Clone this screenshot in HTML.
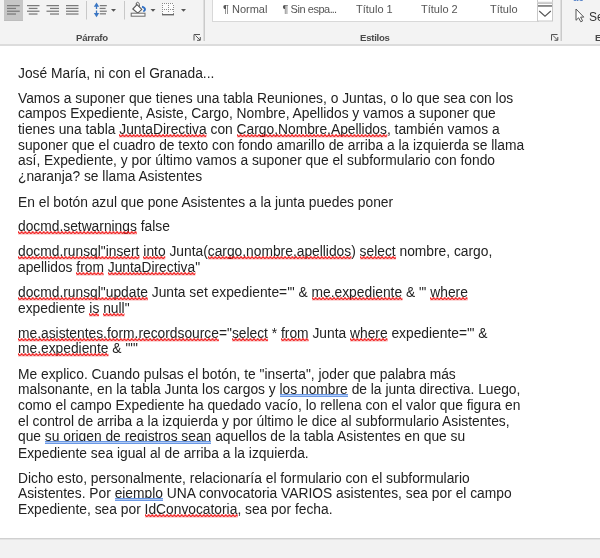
<!DOCTYPE html>
<html><head><meta charset="utf-8">
<style>
html,body{margin:0;padding:0;}
body{width:600px;height:558px;overflow:hidden;position:relative;background:#fff;font-family:"Liberation Sans",sans-serif;}
#rib{position:absolute;left:0;top:0;width:600px;height:44px;background:#f3f3f3;}
#ribb{position:absolute;left:0;top:44px;width:600px;height:2px;background:#dcdcdc;}
#bot{position:absolute;left:0;top:538px;width:600px;height:20px;background:linear-gradient(#d0d0d0 0 1px,#e3e3e3 1px 2px,#f2f2f2 2px);}
.ab{position:absolute;}
.grp{position:absolute;top:32px;font-size:9.6px;font-weight:bold;letter-spacing:-0.25px;color:#4a4a4a;line-height:12px;}
.sep{position:absolute;width:1px;background:#c6c6c6;}
.gal{position:absolute;left:212px;top:-1px;width:325px;height:21px;background:#fff;border:1px solid #d8d8d8;}
.sty{position:absolute;top:3.4px;font-size:11px;color:#555;line-height:13px;}
.doc{position:absolute;left:0;top:0;width:600px;height:558px;font-size:13.8px;color:#222;will-change:transform;}
.ln{position:absolute;left:18px;white-space:pre;line-height:16px;}
.sq{position:relative;}
.sq svg{position:absolute;left:0;bottom:-0.5px;width:100%;height:3.5px;overflow:visible;}
.bl{position:relative;}
.bl::after{content:"";position:absolute;left:0;right:0;bottom:0px;height:3px;background:linear-gradient(#6a98e6 0 1px,#b4cdf3 1px 2px,#6a98e6 2px 3px);}
</style></head><body>
<div id="root" style="position:absolute;left:0;top:0;width:600px;height:558px;will-change:transform;">
<svg width="0" height="0" style="position:absolute">
<defs><pattern id="zz" width="3.67" height="3.5" patternUnits="userSpaceOnUse"><path d="M-1.835 2.75 L0 0.75 L1.835 2.75 L3.67 0.75 L5.5 2.75" stroke="#f01010" stroke-width="1.3" fill="none"/></pattern></defs>
</svg>
<div id="rib"></div>
<div id="ribb"></div>

<!-- paragraph group icons -->
<div class="ab" style="left:4px;top:0;width:19px;height:20.5px;background:#c6c6c6;box-shadow:inset 0 -1px 0 #bdbdbd;"></div>
<svg class="ab" style="left:0;top:0" width="600" height="44">
 <g fill="#7a7a7a">
  <!-- left align -->
  <rect x="7.00" y="5.0" width="12.75" height="1.25"/><rect x="7.00" y="7.8" width="9.00" height="1.25"/><rect x="7.00" y="10.6" width="12.75" height="1.25"/><rect x="7.00" y="13.4" width="9.00" height="1.25"/>
  <rect x="27.00" y="5.0" width="12.50" height="1.25"/><rect x="28.75" y="7.8" width="8.75" height="1.25"/><rect x="27.00" y="10.6" width="12.50" height="1.25"/><rect x="28.75" y="13.4" width="8.75" height="1.25"/>
  <rect x="46.50" y="5.0" width="12.50" height="1.25"/><rect x="50.00" y="7.8" width="9.00" height="1.25"/><rect x="46.50" y="10.6" width="12.50" height="1.25"/><rect x="50.00" y="13.4" width="9.00" height="1.25"/>
  <rect x="66.00" y="5.0" width="12.50" height="1.25"/><rect x="66.00" y="7.8" width="12.50" height="1.25"/><rect x="66.00" y="10.6" width="12.50" height="1.25"/><rect x="66.00" y="13.4" width="12.50" height="1.25"/>
  <!-- line spacing lines -->
  <rect x="99.8" y="5" width="7" height="1.25"/><rect x="99.6" y="7.8" width="6" height="1.25"/><rect x="99.8" y="10.6" width="7" height="1.25"/><rect x="99.8" y="13.2" width="6.2" height="1.25"/>
 </g>
 <g fill="#c8c8c8">
  <rect x="86" y="1" width="1" height="18.5"/>
  <rect x="124" y="1" width="1" height="18.5"/>
 </g>
 <!-- line spacing arrows -->
 <g fill="#3a76c3">
  <path d="M93.8 6.8 L96.5 2.4 L99.2 6.8 Z"/>
  <rect x="95.85" y="6" width="1.3" height="3"/>
  <rect x="95.85" y="10.5" width="1.3" height="3"/>
  <path d="M93.8 13 L99.2 13 L96.5 17.2 Z"/>
 </g>
 <g fill="#555">
  <path d="M111 9 H116 L113.5 11.8 Z"/>
  <path d="M150.5 9 H155.5 L153 11.8 Z"/>
  <path d="M181 9 H186 L183.5 11.8 Z"/>
 </g>
 <!-- paint bucket -->
 <path d="M132.8 9 L137 4.6 L141.8 9.4 L137.8 13.2 Z" fill="#fff" stroke="#5a5a5a" stroke-width="1.1" stroke-linejoin="round"/>
 <path d="M136.3 5.2 Q135.6 2.3 137.6 2.3 Q139.6 2.4 139.4 6.6" fill="none" stroke="#5a5a5a" stroke-width="1"/>
 <path d="M142 6.6 Q145.3 7.6 145 9.8 Q144.7 11.2 143.2 11.2" fill="none" stroke="#2f6fc4" stroke-width="1.8"/>
 <rect x="131.2" y="13.2" width="13.8" height="3" fill="#fafafa" stroke="#6a6a6a" stroke-width="1"/>
 <!-- borders -->
 <rect x="162" y="3" width="12" height="12" fill="#fbfbfb"/>
 <g fill="#8a8a8a">
  <path d="M162 3h1v1h-1zM164 3h1v1h-1zM166 3h1v1h-1zM168 3h1v1h-1zM170 3h1v1h-1zM172 3h1v1h-1z"/>
  <path d="M162 5h1v1h-1zM162 7h1v1h-1zM162 9h1v1h-1zM162 11h1v1h-1zM162 13h1v1h-1z"/>
  <path d="M173 5h1v1h-1zM173 7h1v1h-1zM173 9h1v1h-1zM173 11h1v1h-1zM173 13h1v1h-1z"/>
  <path d="M168 5h1v1h-1zM168 7h1v1h-1zM168 9h1v1h-1zM168 11h1v1h-1z"/>
  <path d="M164 9h1v1h-1zM166 9h1v1h-1zM170 9h1v1h-1zM172 9h1v1h-1z"/>
 </g>
 <rect x="162" y="14" width="12" height="1.4" fill="#6a6a6a"/>
 <!-- dialog launchers -->
 <g fill="none" stroke="#555" stroke-width="1">
  <path d="M194 40.5 V34.5 H200"/>
  <path d="M195.5 35.5 L200 40 M197 40.3 H200.3 V37"/>
  <path d="M551.5 40.5 V34.5 H557.5"/>
  <path d="M553 35.5 L557.5 40 M554.5 40.3 H557.8 V37"/>
 </g>
 <!-- group separators -->
 <rect x="203.5" y="0" width="1.5" height="41" fill="#cacaca"/>
 <rect x="560.5" y="0" width="1.5" height="41" fill="#cacaca"/>
</svg>
<div class="grp" style="left:76px;">Párrafo</div>

<!-- styles gallery -->
<div class="gal"></div>
<div class="sty" style="left:223px;">¶ Normal</div>
<div class="sty" style="left:282.5px;letter-spacing:-0.45px">¶ Sin espa<span style="letter-spacing:-1px">...</span></div>
<div class="sty" style="left:356px;">Título 1</div>
<div class="sty" style="left:421px;">Título 2</div>
<div class="sty" style="left:490px;">Título</div>
<svg class="ab" style="left:536px;top:-1px" width="18" height="24">
 <rect x="1.5" y="-2" width="15" height="5.3" fill="#fff" stroke="#c8c8c8"/>
 <rect x="1.5" y="4.5" width="15" height="17.5" fill="#fff" stroke="#c8c8c8"/>
 <rect x="2" y="6.3" width="14" height="1.3" fill="#555"/>
 <path d="M3.2 12 L9 17.2 L14.8 12" stroke="#555" stroke-width="1.1" fill="none"/>
</svg>
<div class="grp" style="left:360px;">Estilos</div>
<!-- right edge -->
<div class="ab" style="left:573px;top:-7px;font-size:10px;line-height:10px;color:#3b6fc0;">ac</div>
<svg class="ab" style="left:575px;top:8px" width="12" height="16">
 <path d="M1 1 V12.3 L3.6 9.8 L5.8 13.8 L7.6 12.9 L5.6 9.1 L8.8 9.1 Z" fill="#fff" stroke="#555" stroke-width="1"/>
</svg>
<div class="ab" style="left:589px;top:10px;font-size:12px;color:#333;">Se</div>
<div class="grp" style="left:595px;">E</div>

<div id="bot"></div>

<div class="doc">
<div class="ln" style="top:66px">José María, ni con el Granada...</div>

<div class="ln" style="top:91px">Vamos a suponer que tienes una tabla Reuniones, o Juntas, o lo que sea con los</div>
<div class="ln" style="top:106px">campos Expediente, Asiste, Cargo, Nombre, Apellidos y vamos a suponer que</div>
<div class="ln" style="top:122px">tienes una tabla <span class="sq">JuntaDirectiva<svg><rect width="100%" height="3.5" fill="url(#zz)"/></svg></span> con <span class="sq">Cargo,Nombre,Apellidos<svg><rect width="100%" height="3.5" fill="url(#zz)"/></svg></span>, también vamos a</div>
<div class="ln" style="top:138px">suponer que el cuadro de texto con fondo amarillo de arriba a la izquierda se llama</div>
<div class="ln" style="top:153px">así, Expediente, y por último vamos a suponer que el subformulario con fondo</div>
<div class="ln" style="top:169px">¿naranja? se llama Asistentes</div>

<div class="ln" style="top:195px">En el botón azul que pone Asistentes a la junta puedes poner</div>

<div class="ln" style="top:219px"><span class="sq">docmd.setwarnings<svg><rect width="100%" height="3.5" fill="url(#zz)"/></svg></span> false</div>

<div class="ln" style="top:244px"><span class="sq">docmd.runsql"insert<svg><rect width="100%" height="3.5" fill="url(#zz)"/></svg></span> <span class="sq">into<svg><rect width="100%" height="3.5" fill="url(#zz)"/></svg></span> Junta(<span class="sq">cargo,nombre,apellidos<svg><rect width="100%" height="3.5" fill="url(#zz)"/></svg></span>) <span class="sq">select<svg><rect width="100%" height="3.5" fill="url(#zz)"/></svg></span> nombre, cargo,</div>
<div class="ln" style="top:260px">apellidos <span class="sq">from<svg><rect width="100%" height="3.5" fill="url(#zz)"/></svg></span> <span class="sq">JuntaDirectiva<svg><rect width="100%" height="3.5" fill="url(#zz)"/></svg></span>"</div>

<div class="ln" style="top:285px"><span class="sq">docmd.runsql"update<svg><rect width="100%" height="3.5" fill="url(#zz)"/></svg></span> Junta set expediente='" &amp; <span class="sq">me.expediente<svg><rect width="100%" height="3.5" fill="url(#zz)"/></svg></span> &amp; "' <span class="sq">where<svg><rect width="100%" height="3.5" fill="url(#zz)"/></svg></span></div>
<div class="ln" style="top:301px">expediente <span class="sq">is<svg><rect width="100%" height="3.5" fill="url(#zz)"/></svg></span> <span class="sq">null<svg><rect width="100%" height="3.5" fill="url(#zz)"/></svg></span>"</div>

<div class="ln" style="top:326px"><span class="sq">me.asistentes.form.recordsource<svg><rect width="100%" height="3.5" fill="url(#zz)"/></svg></span>="<span class="sq">select<svg><rect width="100%" height="3.5" fill="url(#zz)"/></svg></span> * <span class="sq">from<svg><rect width="100%" height="3.5" fill="url(#zz)"/></svg></span> Junta <span class="sq">where<svg><rect width="100%" height="3.5" fill="url(#zz)"/></svg></span> expediente='" &amp;</div>
<div class="ln" style="top:341px"><span class="sq">me.expediente<svg><rect width="100%" height="3.5" fill="url(#zz)"/></svg></span> &amp; "'"</div>

<div class="ln" style="top:367px">Me explico. Cuando pulsas el botón, te "inserta", joder que palabra más</div>
<div class="ln" style="top:382px">malsonante, en la tabla Junta los cargos y <span class="bl">los nombre</span> de la junta directiva. Luego,</div>
<div class="ln" style="top:398px">como el campo Expediente ha quedado vacío, lo rellena con el valor que figura en</div>
<div class="ln" style="top:414px">el control de arriba a la izquierda y por último le dice al subformulario Asistentes,</div>
<div class="ln" style="top:429px">que <span class="bl">su origen de registros sean</span> aquellos de la tabla Asistentes en que su</div>
<div class="ln" style="top:446px">Expediente sea igual al de arriba a la izquierda.</div>

<div class="ln" style="top:471px">Dicho esto, personalmente, relacionaría el formulario con el subformulario</div>
<div class="ln" style="top:486px">Asistentes. Por <span class="bl">ejemplo</span> UNA convocatoria VARIOS asistentes, sea por el campo</div>
<div class="ln" style="top:502px">Expediente, sea por <span class="sq">IdConvocatoria<svg><rect width="100%" height="3.5" fill="url(#zz)"/></svg></span>, sea por fecha.</div>
</div>
</div>
</body></html>
